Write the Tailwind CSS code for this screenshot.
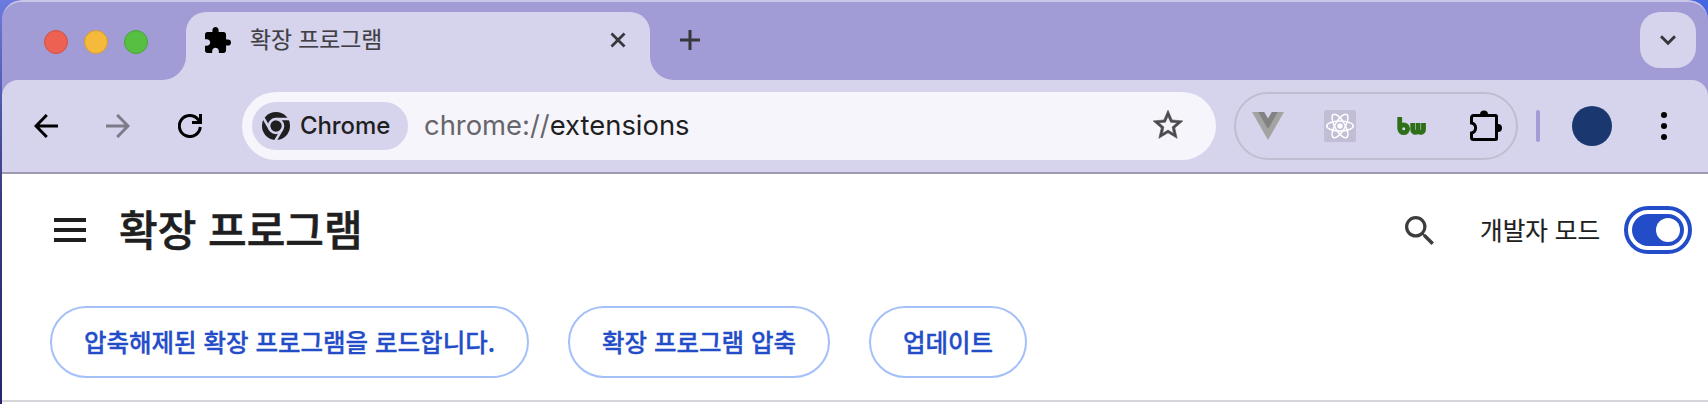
<!DOCTYPE html>
<html lang="ko">
<head>
<meta charset="utf-8">
<title>확장 프로그램</title>
<script src="https://cdn.jsdelivr.net/npm/@tailwindcss/browser@4"></script>
</head>
<body class="h-[404px] w-[1708px] overflow-hidden bg-linear-to-b from-[#6c7be0] via-[#363c7d] to-[#26276a] font-['Inter','Noto_Sans_CJK_KR',sans-serif]">
<div class="h-full bg-linear-to-r from-transparent from-95% to-[#4767e0] to-96% pl-[2px]">
<div class="flex h-[404px] flex-col overflow-hidden rounded-t-[20px] bg-[#a19bd6]">
  <!-- Tab strip -->
  <header class="flex h-20 shrink-0 rounded-t-[20px] border-t-2 border-[#c9c6e7]">
    <div class="flex w-[160px] items-center gap-4 pt-px pl-[42px]">
      <span class="size-6 rounded-full border border-[#d2503f] bg-[#ec6152]"></span>
      <span class="size-6 rounded-full border border-[#d79c33] bg-[#f5b93b]"></span>
      <span class="size-6 rounded-full border border-[#48a535] bg-[#57c043]"></span>
    </div>
    <svg class="size-6 self-end" viewBox="0 0 24 24"><path d="M24 0v24H0A24 24 0 0 0 24 0z" fill="#d6d3ec"/></svg>
    <div class="mt-[10px] flex h-[68px] w-[464px] items-start rounded-t-[20px] bg-[#d6d3ec] pt-[15px] pr-6 pl-[19px]">
      <svg class="size-[26px]" viewBox="2 1 21 21"><path d="M20.5 11H19V7c0-1.1-.9-2-2-2h-4V3.5C13 2.12 11.88 1 10.5 1S8 2.12 8 3.5V5H4c-1.1 0-1.99.9-1.99 2v3.8H3.5c1.49 0 2.7 1.21 2.7 2.7s-1.21 2.7-2.7 2.7H2V20c0 1.1.9 2 2 2h3.8v-1.5c0-1.49 1.21-2.7 2.7-2.7s2.7 1.21 2.7 2.7V22H17c1.1 0 2-.9 2-2v-4h1.5a2.5 2.5 0 0 0 0-5z"/></svg>
      <span class="-mt-px ml-[19px] font-['Noto_Sans_CJK_KR',sans-serif] text-[22.8px] leading-[25px] whitespace-nowrap text-[#3f3f45] [-webkit-text-stroke:0.2px_#3f3f45]">확장 프로그램</span>
      <svg class="mt-[5px] ml-auto size-4" viewBox="0 0 16 16"><path d="M1.5 1.5l13 13m0-13l-13 13" stroke="#36373b" stroke-width="2.8"/></svg>
    </div>
    <svg class="size-6 self-end" viewBox="0 0 24 24"><path d="M0 0v24h24A24 24 0 0 1 0 0z" fill="#d6d3ec"/></svg>
    <svg class="mt-7 ml-[6px] size-5" viewBox="0 0 20 20"><path d="M10 0v20M0 10h20" stroke="#36373b" stroke-width="3"/></svg>
    <div class="mt-[10px] mr-3 ml-auto flex size-14 items-center justify-center rounded-[20px] bg-[#d6d3ec]">
      <svg class="h-[10px] w-4" viewBox="0 0 16 10"><path d="M1 1.2l7 7 7-7" fill="none" stroke="#36373b" stroke-width="3"/></svg>
    </div>
  </header>

  <!-- Toolbar -->
  <nav class="flex h-[94px] shrink-0 items-center rounded-t-[16px] border-b-2 border-[#9d99b1] bg-[#d6d3ec] pl-8">
    <svg class="size-6" viewBox="0 0 24 24"><path d="M24 12H2M12.8 1L2 12l10.8 11" fill="none" stroke="#000" stroke-width="3"/></svg>
    <svg class="ml-12 size-6" viewBox="0 0 24 24"><path d="M0 12h22M11.2 1L22 12 11.2 23" fill="none" stroke="#7d7b89" stroke-width="3"/></svg>
    <svg class="ml-12 size-6" viewBox="0 0 24 24"><path d="M22.3 13A10.5 10.5 0 1 1 20.2 5.6l2 3" fill="none" stroke="#000" stroke-width="3"/><path d="M21 0h3v10H14V7h7z"/></svg>
    <div class="ml-10 flex h-[68px] w-[974px] items-center rounded-full bg-[#f6f5fb] pr-8 pl-[10px]">
      <div class="flex h-12 w-[156px] items-center rounded-full bg-[#d6d3ec] pl-[10px]">
        <svg class="size-7" viewBox="0 0 28 28"><circle cx="14" cy="14" r="14" fill="#1f1f22"/><circle cx="14" cy="14" r="7" fill="none" stroke="#d6d3ec" stroke-width="2.6"/><path d="M14 7h13M8 17.4L1.500 6.200M20 17.400L13.500 28.600" stroke="#d6d3ec" stroke-width="2.600"/></svg>
        <span class="ml-[10px] text-2xl leading-none font-medium tracking-[-0.1px] text-[#1f1f22]">Chrome</span>
      </div>
      <span class="ml-4 text-[27.400px] leading-none whitespace-nowrap text-[#1f1f22]"><span class="text-[#66656b]">chrome://</span>extensions</span>
      <svg class="mb-1 ml-auto h-[30px] w-8" viewBox="1.2 1.2 21.6 20.25"><path fill="#4b4a4f" stroke="#4b4a4f" stroke-width=".4" d="M22 9.24l-7.19-.62L12 2 9.19 8.63 2 9.24l5.46 4.73L5.82 21 12 17.27 18.18 21l-1.63-7.03L22 9.24zM12 15.4l-3.76 2.27 1-4.28-3.32-2.88 4.38-.38L12 6.1l1.71 4.04 4.38.38-3.32 2.88 1 4.28L12 15.4z"/></svg>
    </div>
    <div class="ml-[18px] flex h-[68px] w-[284px] items-center rounded-full border-2 border-[#c0bdd3] pl-4">
      <svg class="h-7 w-8" viewBox="0 0 32 28"><path d="M0 0h32L16 28z" fill="#a3a3a1"/><path d="M6.2 0h19.6L16 17z" fill="#828282"/><path d="M12.2 0h7.6L16 6.5z" fill="#d6d3ec"/></svg>
      <svg class="ml-10 size-8" viewBox="0 0 32 32"><rect width="32" height="32" rx="2.5" fill="#c0bdd5"/><g fill="none" stroke="#fff" stroke-width="1.5"><ellipse cx="16" cy="16" rx="13.3" ry="5"/><ellipse cx="16" cy="16" rx="13.3" ry="5" transform="rotate(60 16 16)"/><ellipse cx="16" cy="16" rx="13.3" ry="5" transform="rotate(120 16 16)"/></g><circle cx="16" cy="16" r="2.7" fill="#fff"/></svg>
      <svg class="ml-[41px] h-[18px] w-[30px]" viewBox="0 0 30 18"><g fill="none" stroke="#2f6f18" stroke-width="4.800"><path d="M2.700 0v11.500"/><circle cx="6.700" cy="11.700" r="3.900"/><path d="M15.700 6v6.200c0 4.300 5.400 4.300 5.400 0V6v6.200c0 4.300 5.400 4.300 5.400 0V6"/></g></svg>
      <svg class="ml-[43px] size-8" viewBox="0 0 32 32"><path d="M3.500 5.500h22a1 1 0 0 1 1 1v22a1 1 0 0 1-1 1h-22a2 2 0 0 1-2-2V23a5.100 5.100 0 0 0 0-10V7.500a2 2 0 0 1 2-2z" fill="none" stroke="#000" stroke-width="3"/><path d="M10 4.500a4 4 0 0 1 8 0zM28 14a4 4 0 0 1 0 8z"/></svg>
    </div>
    <span class="ml-[18px] h-8 w-1 rounded-full bg-[#a39cd7]"></span>
    <span class="ml-8 size-10 rounded-full bg-[#1a386f]"></span>
    <span class="ml-[49px] flex flex-col gap-[5px]"><i class="size-[6px] rounded-full bg-black"></i><i class="size-[6px] rounded-full bg-black"></i><i class="size-[6px] rounded-full bg-black"></i></span>
  </nav>

  <!-- Extensions page -->
  <main class="grow bg-white font-['Noto_Sans_CJK_KR',sans-serif]">
    <div class="flex h-28 items-center pr-4 pl-[52px]">
      <svg class="h-6 w-8" viewBox="0 0 32 24"><path d="M0 2h32M0 12h32M0 22h32" stroke="#1f1f22" stroke-width="4"/></svg>
      <h1 class="mb-[5px] ml-[33px] text-[42px] leading-none font-medium whitespace-nowrap text-[#1f1f22] [-webkit-text-stroke:0.6px_#1f1f22]">확장 프로그램</h1>
      <svg class="ml-auto size-[29px]" viewBox="3 3 17.500 17.500"><path fill="#3c3d3c" d="M15.500 14h-.79l-.28-.27A6.471 6.471 0 0 0 16 9.500 6.500 6.500 0 1 0 9.500 16c1.610 0 3.090-.59 4.230-1.570l.27.28v.79l5 4.990L20.490 19l-4.990-5zm-6 0C7.010 14 5 11.990 5 9.500S7.010 5 9.500 5 14 7.010 14 9.500 11.990 14 9.500 14z"/></svg>
      <span class="mb-px ml-[46px] w-[121px] text-[24.600px] leading-none whitespace-nowrap text-[#1f1f22] [-webkit-text-stroke:0.2px_#1f1f22]">개발자 모드</span>
      <span class="ml-[23px] flex h-12 w-[68px] rounded-full border-4 border-[#234dc8] p-1"><span class="flex grow items-center justify-end rounded-full bg-[#234dc8] pr-1"><i class="size-6 rounded-full bg-white"></i></span></span>
    </div>
    <div class="flex h-[116px] items-start border-b-2 border-[#d6d5dc] pt-5 pl-12 text-[24.500px] font-medium whitespace-nowrap text-[#234dc8] [-webkit-text-stroke:0.3px_#234dc8]">
      <button class="flex h-[72px] w-[479px] items-center justify-center rounded-full border-2 border-[#a5c0f8]">압축해제된 확장 프로그램을 로드합니다.</button>
      <button class="ml-[39px] flex h-[72px] w-[262px] items-center justify-center rounded-full border-2 border-[#a5c0f8]">확장 프로그램 압축</button>
      <button class="ml-[39px] flex h-[72px] w-[158px] items-center justify-center rounded-full border-2 border-[#a5c0f8]">업데이트</button>
    </div>
  </main>
</div>
</div>
</body>
</html>
